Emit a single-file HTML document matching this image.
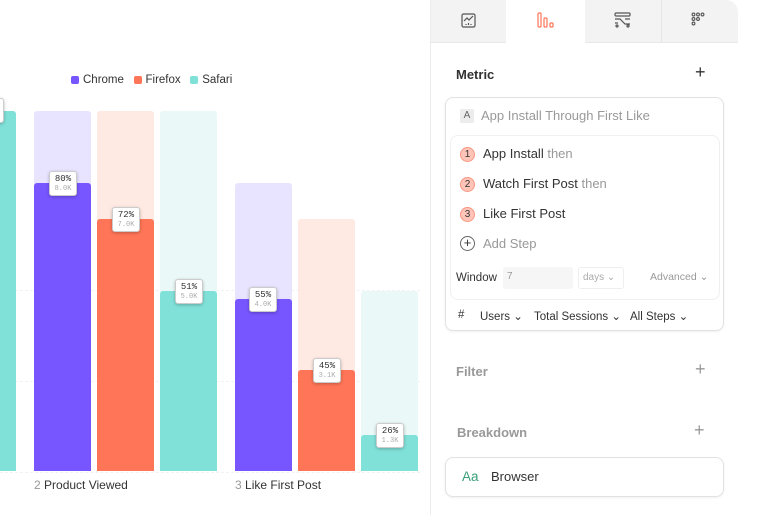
<!DOCTYPE html>
<html><head><style>
*{box-sizing:border-box;margin:0;padding:0}
body{width:767px;height:515px;background:#fff;font-family:"Liberation Sans",sans-serif;position:relative;overflow:hidden;color:#333}
.a{position:absolute}
.bar{position:absolute;border-radius:3px 3px 0 0}
.lbl{position:absolute;width:28px;height:25px;background:#fff;border:1px solid #ccc;border-radius:3px;box-shadow:0 1px 3px rgba(0,0,0,.25);font-family:"Liberation Mono",monospace;text-align:center;font-size:9px;line-height:10px;padding-top:2px;color:#333}
.lbl span{display:block;color:#aaa;font-size:7px}
.grid{position:absolute;left:0;width:420px;border-top:1px dashed #f2f2f2}
.sw{display:inline-block;width:8px;height:8px;border-radius:2px;margin-right:4px;vertical-align:-1px}
.hex{display:inline-block;width:15px;height:15px;border-radius:50%;background:#ffc4b8;border:1px solid #f79682;color:#333;font-size:10px;text-align:center;line-height:13px;margin-right:8px;vertical-align:1px}
.step{position:absolute;left:460px;font-size:13px;color:#333}
.grey{color:#999}
.dd{font-size:11.5px;color:#333}
</style></head><body>
<div class="a" style="left:71px;top:74px;font-size:11.5px;color:#333"><span class="sw" style="background:#7856ff"></span>Chrome&nbsp;&nbsp;&nbsp;<span class="sw" style="background:#ff7557"></span>Firefox&nbsp;&nbsp;&nbsp;<span class="sw" style="background:#80e1d9"></span>Safari</div>
<div class="grid" style="top:290px"></div><div class="grid" style="top:381px"></div><div class="grid" style="top:472px"></div>
<div class="bar" style="left:0;width:16px;top:111px;height:360px;background:#80e1d9"></div>
<div class="lbl" style="left:-24px;top:98px"></div>
<div class="bar" style="left:34px;width:57px;top:111px;height:360px;background:#e8e4ff"></div>
<div class="bar" style="left:34px;width:57px;top:183px;height:288px;background:#7856ff"></div>
<div class="bar" style="left:97px;width:57px;top:111px;height:360px;background:#ffe9e3"></div>
<div class="bar" style="left:97px;width:57px;top:219px;height:252px;background:#ff7557"></div>
<div class="bar" style="left:160px;width:57px;top:111px;height:360px;background:#eaf8f7"></div>
<div class="bar" style="left:160px;width:57px;top:291px;height:180px;background:#80e1d9"></div>
<div class="bar" style="left:235px;width:57px;top:183px;height:288px;background:#e8e4ff"></div>
<div class="bar" style="left:235px;width:57px;top:299px;height:172px;background:#7856ff"></div>
<div class="bar" style="left:298px;width:57px;top:219px;height:252px;background:#ffe9e3"></div>
<div class="bar" style="left:298px;width:57px;top:370px;height:101px;background:#ff7557"></div>
<div class="bar" style="left:361px;width:57px;top:291px;height:180px;background:#eaf8f7"></div>
<div class="bar" style="left:361px;width:57px;top:435px;height:36px;background:#80e1d9"></div>
<div class="lbl" style="left:49px;top:171px">80%<span>8.0K</span></div>
<div class="lbl" style="left:112px;top:207px">72%<span>7.0K</span></div>
<div class="lbl" style="left:175px;top:279px">51%<span>5.0K</span></div>
<div class="lbl" style="left:249px;top:287px">55%<span>4.0K</span></div>
<div class="lbl" style="left:313px;top:358px">45%<span>3.1K</span></div>
<div class="lbl" style="left:376px;top:423px">26%<span>1.3K</span></div>
<div class="a" style="left:34px;top:478px;font-size:12px"><span class="grey">2</span> Product Viewed</div>
<div class="a" style="left:235px;top:478px;font-size:12px"><span class="grey">3</span> Like First Post</div>

<div class="a" style="left:430px;top:0;width:1px;height:515px;background:#ececec"></div>
<div class="a" style="left:431px;top:0;width:307px;height:42px;background:#f3f3f3;border-radius:0 12px 0 0"></div>
<div class="a" style="left:506px;top:0;width:79px;height:43px;background:#fff"></div>
<div class="a" style="left:661px;top:0;width:1px;height:42px;background:#e6e6e6"></div>
<div class="a" style="left:431px;top:42px;width:75px;height:1px;background:#e8e8e8"></div>
<div class="a" style="left:585px;top:42px;width:153px;height:1px;background:#e8e8e8"></div>
<svg class="a" style="left:461px;top:13px" width="15" height="15" viewBox="0 0 15 15" fill="none" stroke="#555" stroke-width="1.2"><rect x="1" y="1" width="13" height="13" rx="1.5"/><path d="M3 8l3-3 2 2 4-4"/><path d="M5 12v-1M7.5 12v-2M10 12v-1"/></svg>
<svg class="a" style="left:537px;top:12px" width="17" height="16" viewBox="0 0 17 16" fill="none" stroke="#ff7557" stroke-width="1.2"><rect x="1" y="1" width="3" height="14" rx="1"/><rect x="7" y="6" width="3" height="9" rx="1"/><rect x="13" y="11" width="3" height="4" rx="1"/></svg>
<svg class="a" style="left:614px;top:12px" width="17" height="16" viewBox="0 0 17 16" fill="none" stroke="#555" stroke-width="1.2"><rect x="1" y="1" width="15" height="3" rx="1"/><path d="M1 7h5l5 5h5M1 11h3M11 7h5"/><circle cx="3" cy="14" r="1"/><circle cx="14" cy="14" r="1"/></svg>
<svg class="a" style="left:691px;top:12px" width="16" height="16" viewBox="0 0 16 16" fill="none" stroke="#555" stroke-width="1.1"><circle cx="2.5" cy="2.5" r="1.4"/><circle cx="7" cy="2.5" r="1.4"/><circle cx="11.5" cy="2.5" r="1.4"/><circle cx="2.5" cy="7" r="1.4"/><circle cx="7" cy="7" r="1.4"/><circle cx="2.5" cy="11.5" r="1.4"/></svg>

<div class="a" style="left:456px;top:67px;font-size:13px;font-weight:bold;color:#333">Metric</div>
<div class="a" style="left:695px;top:62px;font-size:18px;color:#333">+</div>
<div class="a" style="left:445px;top:97px;width:279px;height:234px;border:1px solid #e2e2e2;border-radius:8px;box-shadow:0 1px 2px rgba(0,0,0,.06)"></div>
<div class="a" style="left:460px;top:109px;width:14px;height:14px;background:#ececec;border-radius:2px;font-size:10px;text-align:center;line-height:14px;color:#666">A</div>
<div class="a" style="left:481px;top:108px;font-size:13px;color:#999">App Install Through First Like</div>
<div class="a" style="left:450px;top:135px;width:270px;height:165px;border:1px solid #f0f0f0;border-radius:8px"></div>
<div class="step" style="top:146px"><span class="hex">1</span>App Install <span class="grey">then</span></div>
<div class="step" style="top:176px"><span class="hex">2</span>Watch First Post <span class="grey">then</span></div>
<div class="step" style="top:206px"><span class="hex">3</span>Like First Post</div>
<div class="step" style="top:236px;color:#999"><span class="hex" style="background:#fff;border-color:#666;color:#333;font-size:13px;line-height:12px">+</span>Add Step</div>
<div class="a" style="left:456px;top:272px;font-size:11.5px">Window</div>
<div class="a" style="left:503px;top:267px;width:70px;height:22px;background:#f6f6f6;border-radius:3px;font-size:10px;color:#999;padding:4px 4px">7</div>
<div class="a" style="left:578px;top:267px;width:46px;height:22px;border:1px solid #eee;border-radius:3px;font-size:10px;color:#aaa;padding:4px 4px">days ⌄</div>
<div class="a" style="left:650px;top:271px;font-size:10.5px;color:#999">Advanced ⌄</div>
<div class="a dd" style="left:458px;top:309px">#</div>
<div class="a dd" style="left:480px;top:309px">Users ⌄</div>
<div class="a dd" style="left:534px;top:309px">Total Sessions ⌄</div>
<div class="a dd" style="left:630px;top:309px">All Steps ⌄</div>

<div class="a" style="left:456px;top:364px;font-size:13px;font-weight:bold;color:#999">Filter</div>
<div class="a" style="left:695px;top:359px;font-size:18px;color:#999">+</div>
<div class="a" style="left:457px;top:425px;font-size:13px;font-weight:bold;color:#999">Breakdown</div>
<div class="a" style="left:694px;top:420px;font-size:18px;color:#999">+</div>
<div class="a" style="left:445px;top:457px;width:279px;height:40px;border:1px solid #e2e2e2;border-radius:8px;box-shadow:0 1px 2px rgba(0,0,0,.06)"></div>
<div class="a" style="left:462px;top:469px;font-size:13.5px;color:#3aa07a">Aa</div>
<div class="a" style="left:491px;top:469px;font-size:13px;color:#333">Browser</div>
</body></html>
